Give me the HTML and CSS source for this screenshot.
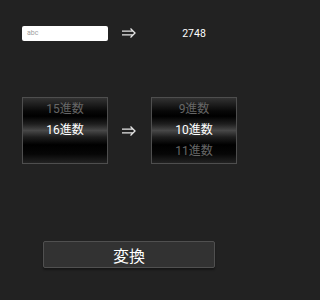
FILE: index.html
```html
<!DOCTYPE html>
<html>
<head>
<meta charset="utf-8">
<link rel="stylesheet" href="styles.css">
</head>
<body>
<div class="screen">
  <div class="row top-row">
    <div class="input"><span class="placeholder">abc</span></div>
    <div class="arrow">
      <svg width="16" height="12" viewBox="0 0 16 12"><path d="M1 4.2h11.5M1 7.8h11.5M9.5 1.5L14 6l-4.5 4.5" fill="none" stroke="#e6e6e6" stroke-width="1.3"/></svg>
    </div>
    <div class="result">2748</div>
  </div>
  <div class="row picker-row">
    <div class="picker">
      <div class="item dim">15進数</div>
      <div class="item sel">16進数</div>
      <div class="item dim"></div>
    </div>
    <div class="arrow">
      <svg width="16" height="12" viewBox="0 0 16 12"><path d="M1 4.2h11.5M1 7.8h11.5M9.5 1.5L14 6l-4.5 4.5" fill="none" stroke="#e6e6e6" stroke-width="1.3"/></svg>
    </div>
    <div class="picker">
      <div class="item dim">9進数</div>
      <div class="item sel">10進数</div>
      <div class="item dim">11進数</div>
    </div>
  </div>
  <div class="btn-row">
    <div class="button">変換</div>
  </div>
</div>
</body>
</html>
```
FILE: styles.css
```css
html, body {
  margin: 0;
  padding: 0;
  background: #222222;
}
.screen {
  width: 258px;
  height: 300px;
  display: flex;
  flex-direction: column;
  font-family: Roboto, "Noto Sans CJK JP", sans-serif;
  color: #fff;
}
.row {
  display: grid;
  grid-template-columns: 86px 43px 86px;
  padding-left: 22px;
  align-items: center;
}
.top-row {
  margin-top: 25px;
  height: 15px;
}
.input {
  height: 15px;
  background: #fff;
  border-radius: 2px;
  box-sizing: border-box;
  display: flex;
  align-items: center;
  padding-left: 5px;
}
.placeholder {
  font-size: 7px;
  color: #a0a0a0;
}
.arrow {
  display: flex;
  justify-content: center;
  align-items: center;
  height: 12px;
}
.arrow svg {
  display: block;
  margin-left: -1px;
}
.result {
  text-align: center;
  font-size: 10.5px;
  color: #fff;
  line-height: 15px;
  padding-top: 1px;
}
.picker-row {
  margin-top: 57px;
}
.picker {
  height: 67px;
  box-sizing: border-box;
  border: 1px solid #4e4e4e;
  padding-top: 1px;
  background: linear-gradient(to bottom,
    #323232 0%, #080808 20%, #000 28%, #1e1e1e 40%, #484848 50%, #1e1e1e 60%, #000 72%, #060606 86%, #222 100%);
  display: flex;
  flex-direction: column;
}
.item {
  height: 21px;
  line-height: 21px;
  text-align: center;
  font-size: 12px;
}
.item.sel {
  color: #fff;
}
.item.dim {
  color: #666;
}
.btn-row {
  display: flex;
  padding-left: 43px;
  margin-top: 77px;
}
.button {
  width: 172px;
  height: 27px;
  box-sizing: border-box;
  border: 1px solid #505050;
  border-radius: 2px;
  background: #323232;
  box-shadow: 0 2px 2px rgba(0,0,0,0.35);
  display: flex;
  align-items: center;
  justify-content: center;
  font-size: 16px;
  color: #fff;
}
```
